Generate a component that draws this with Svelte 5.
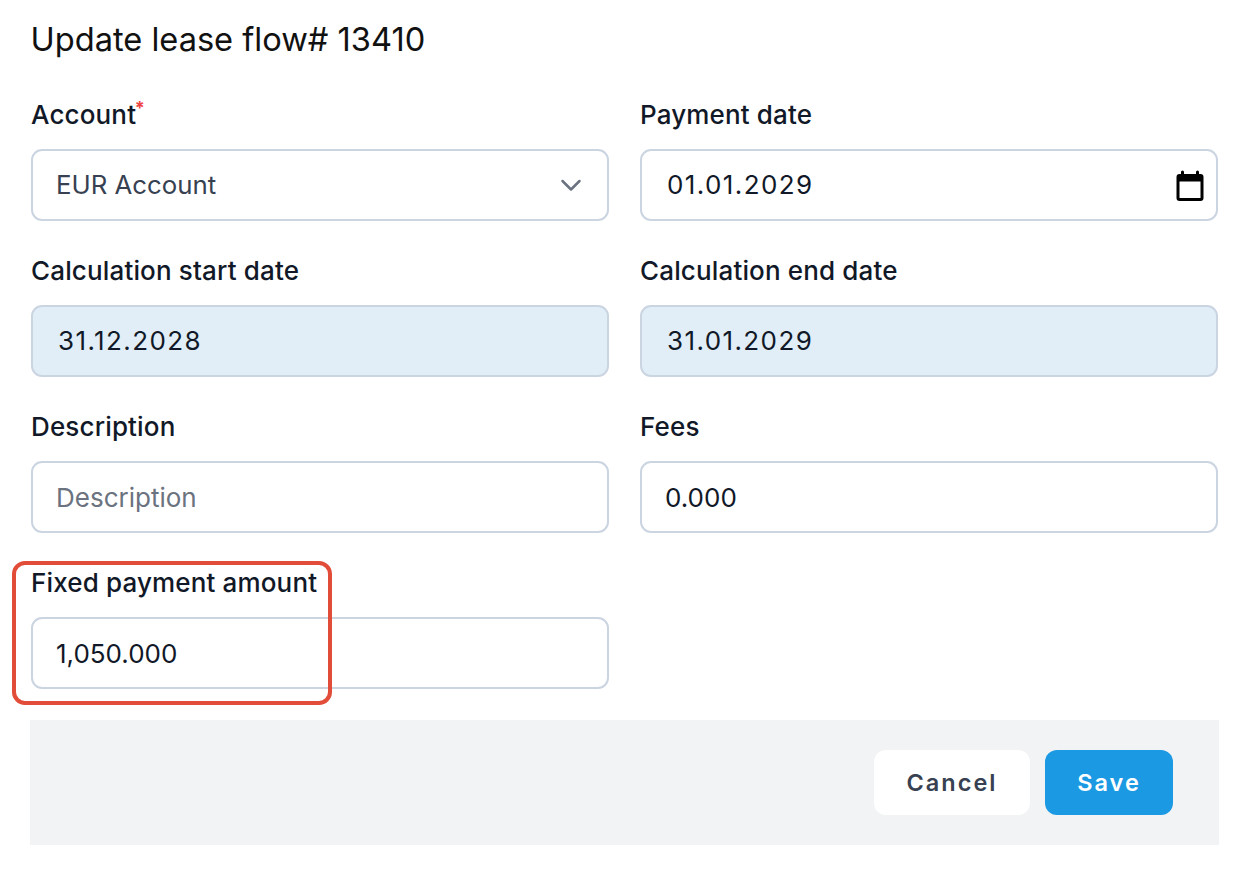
<script>
  const fields = [
    { id: 'calc-start', label: 'Calculation start date', value: '31.12.2028', kind: 'date readonly' },
    { id: 'calc-end', label: 'Calculation end date', value: '31.01.2029', kind: 'date readonly' },
    { id: 'desc', label: 'Description', value: '', placeholder: 'Description', kind: '' },
    { id: 'fees', label: 'Fees', value: '0.000', kind: '' }
  ];
</script>

<form class="page" onsubmit={(e) => e.preventDefault()}>
  <h1>Update lease flow# 13410</h1>

  <div class="grid">
    <div class="field">
      <label for="account">Account<sup>*</sup></label>
      <div class="control select" id="account">
        <span>EUR Account</span>
        <svg width="24" height="24" viewBox="0 0 24 24" fill="none" stroke="#6b7280" stroke-width="2.5" stroke-linecap="round" stroke-linejoin="round" aria-hidden="true"><path d="M3.5 8l8.5 8.5L20.500 8"/></svg>
      </div>
    </div>

    <div class="field">
      <label for="paydate">Payment date</label>
      <div class="control date" id="paydate">
        <span>01.01.2029</span>
        <svg class="cal" width="36" height="36" viewBox="0 0 24 24" aria-hidden="true"><path fill="#000" d="M19 4h-1V2.6a1 1 0 0 0-2 0V4H8V2.6a1 1 0 0 0-2 0V4H5a2 2 0 0 0-2 2v14a2 2 0 0 0 2 2h14a2 2 0 0 0 2-2V6a2 2 0 0 0-2-2zm0 16H5V9h14v11z"/></svg>
      </div>
    </div>

    {#each fields as f}
      <div class="field">
        <label for={f.id}>{f.label}</label>
        <div class="control {f.kind}" id={f.id}>
          {#if f.value}<span>{f.value}</span>{:else}<span class="ph">{f.placeholder}</span>{/if}
        </div>
      </div>
    {/each}

    <div class="field">
      <label for="fixed">Fixed payment amount</label>
      <div class="control" id="fixed"><span>1,050.000</span></div>
    </div>
  </div>

  <div class="footer">
    <button type="button" class="btn cancel">Cancel</button>
    <button type="submit" class="btn save">Save</button>
  </div>

  <div class="highlight"></div>
</form>

<style>
  :global(body) {
    margin: 0;
    background: #fff;
  }
  .page {
    position: relative;
    width: 1249px;
    height: 870px;
    box-sizing: border-box;
    padding: 19px 30px 0 31px;
    font-family: Inter, "Liberation Sans", sans-serif;
  }
  h1 {
    margin: 0 0 40px -0.5px;
    font-size: 32.6px;
    line-height: 40px;
    font-weight: 400;
    color: #111;
  }
  .grid {
    display: grid;
    grid-template-columns: 578px 578px;
    column-gap: 31px;
    row-gap: 34px;
  }
  .field {
    display: flex;
    flex-direction: column;
    gap: 21px;
  }
  label {
    font-size: 26px;
    line-height: 26px;
    height: 26px;
    font-weight: 500;
    letter-spacing: 0.15px;
    color: #111827;
    margin-top: 3px;
  }
  sup {
    color: #ef4444;
    font-size: 18px;
    font-weight: 700;
    line-height: 0;
    vertical-align: 10px;
    margin-left: -1.5px;
  }
  .control {
    box-sizing: border-box;
    height: 72px;
    border: 2px solid #cbd5e1;
    border-radius: 11px;
    padding: 0 8px 0 23px;
    display: flex;
    align-items: center;
    justify-content: space-between;
    font-size: 26px;
    color: #111827;
    background: #fff;
  }
  .select {
    color: #374151;
    font-size: 25.8px;
    padding-right: 24px;
    padding-bottom: 1px;
  }
  .date {
    padding-bottom: 1px;
  }
  .date span {
    letter-spacing: 1.4px;
    padding-left: 2px;
  }
  .readonly {
    background: #e1eef8;
  }
  .ph {
    color: #6b7280;
  }
  .cal {
    flex: none;
    margin-top: 3px;
  }
  .footer {
    margin-top: 31px;
    margin-left: -1px;
    width: 1189px;
    height: 125px;
    box-sizing: border-box;
    background: #f2f3f5;
    padding: 30px 46px 0 0;
    display: flex;
    justify-content: flex-end;
    gap: 15px;
  }
  .btn {
    height: 65px;
    border: none;
    border-radius: 12px;
    font-family: inherit;
    font-size: 23.5px;
    font-weight: 600;
    letter-spacing: 2px;
    padding: 0;
  }
  .cancel {
    width: 156px;
    background: #fff;
    color: #374151;
  }
  .save {
    width: 128px;
    background: #1c99e3;
    color: #fff;
  }
  .highlight {
    position: absolute;
    left: 12px;
    top: 561px;
    width: 320px;
    height: 144px;
    box-sizing: border-box;
    border: 4px solid #e14d38;
    border-radius: 13px;
    pointer-events: none;
  }
</style>
